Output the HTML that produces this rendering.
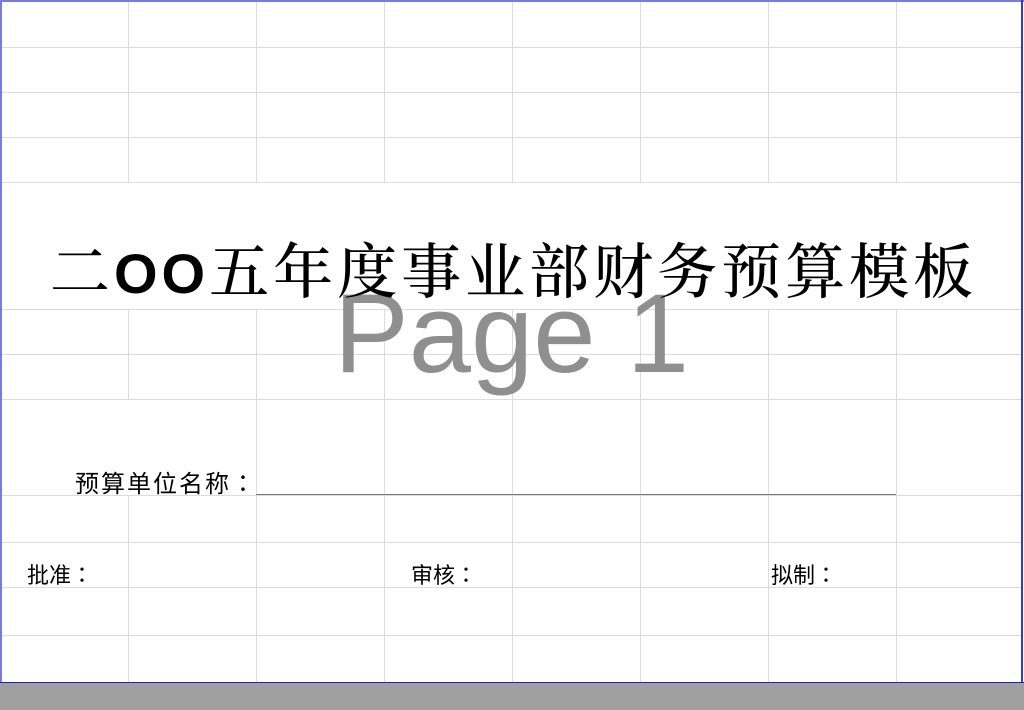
<!DOCTYPE html>
<html><head><meta charset="utf-8"><style>
html,body{margin:0;padding:0;}
body{width:1024px;height:710px;position:relative;overflow:hidden;background:#fff;font-family:"Liberation Sans","Noto Sans CJK SC",sans-serif;}
.h{position:absolute;height:1px;background:#dcdcdc;}
.v{position:absolute;width:1px;background:#dcdcdc;}
.t{position:absolute;white-space:nowrap;color:#000;}
.c{font-family:"Noto Sans CJK JP",sans-serif;}
</style></head><body>
<div class="h" style="left:0;width:1022px;top:47px"></div>
<div class="h" style="left:0;width:1022px;top:92px"></div>
<div class="h" style="left:0;width:1022px;top:137px"></div>
<div class="h" style="left:0;width:1022px;top:182px"></div>
<div class="h" style="left:0;width:1022px;top:309px"></div>
<div class="h" style="left:0;width:1022px;top:354px"></div>
<div class="h" style="left:0;width:1022px;top:399px"></div>
<div class="h" style="left:0;width:1022px;top:495px"></div>
<div class="h" style="left:0;width:1022px;top:542px"></div>
<div class="h" style="left:0;width:1022px;top:587px"></div>
<div class="h" style="left:0;width:1022px;top:635px"></div>
<div class="v" style="left:128px;top:0;height:182px"></div>
<div class="v" style="left:256px;top:0;height:182px"></div>
<div class="v" style="left:384px;top:0;height:182px"></div>
<div class="v" style="left:512px;top:0;height:182px"></div>
<div class="v" style="left:640px;top:0;height:182px"></div>
<div class="v" style="left:768px;top:0;height:182px"></div>
<div class="v" style="left:896px;top:0;height:182px"></div>
<div class="v" style="left:128px;top:309px;height:90px"></div>
<div class="v" style="left:256px;top:309px;height:373px"></div>
<div class="v" style="left:384px;top:309px;height:373px"></div>
<div class="v" style="left:512px;top:309px;height:373px"></div>
<div class="v" style="left:640px;top:309px;height:373px"></div>
<div class="v" style="left:768px;top:309px;height:373px"></div>
<div class="v" style="left:896px;top:309px;height:373px"></div>
<div class="v" style="left:128px;top:495px;height:187px"></div>
<div style="position:absolute;left:256px;width:640px;top:494px;height:1px;background:#777"></div>
<div class="t" style="left:334px;top:272px;font-size:112px;line-height:124px;color:#8a8a8a;opacity:.95">Page 1</div>
<div class="t" style="left:50px;top:232px;font-size:60px;line-height:72px;font-family:'Noto Serif CJK SC','Liberation Serif',serif;letter-spacing:4px;font-weight:500">二<span style="font-family:'Liberation Sans',sans-serif;font-weight:bold;font-size:56px">OO</span>五年度事业部财务预算模板</div>
<div class="t" style="left:75px;top:466px;font-size:24px;line-height:32px;letter-spacing:2px">预算单位名称<span class="c">：</span></div>
<div class="t" style="left:27px;top:559px;font-size:22px;line-height:30px">批准<span class="c">：</span></div>
<div class="t" style="left:411px;top:559px;font-size:22px;line-height:30px">审核<span class="c">：</span></div>
<div class="t" style="left:771px;top:559px;font-size:22px;line-height:30px">拟制<span class="c">：</span></div>
<div style="position:absolute;left:0;top:0;width:1024px;height:2px;background:#7a7ae0"></div>
<div style="position:absolute;left:0;top:0;width:2px;height:683px;background:#7a7ae0"></div>
<div style="position:absolute;left:1021px;top:0;width:2px;height:683px;background:#3a3ac8"></div>
<div style="position:absolute;left:0;top:682px;width:1024px;height:1px;background:#2020c0"></div>
<div style="position:absolute;left:0;top:683px;width:1024px;height:27px;background:#a0a0a0"></div>
</body></html>
